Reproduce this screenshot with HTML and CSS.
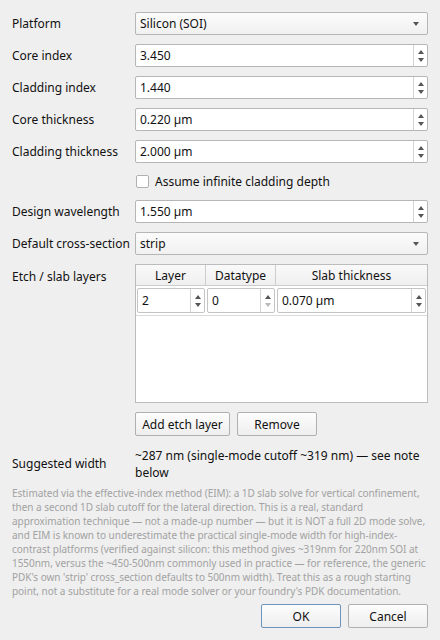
FILE: index.html
```html
<!DOCTYPE html>
<html lang="en">
<head>
  <meta charset="UTF-8">
  <title>Waveguide settings</title>
  <link rel="stylesheet" href="styles.css">
</head>
<body>
  <div class="dialog">
    <div class="form">
      <label>Platform</label>
      <div class="combo"><span>Silicon (SOI)</span><i class="tri-down"></i></div>

      <label>Core index</label>
      <div class="spin"><span>3.450</span><div class="arrows"><i class="tri-up"></i><i class="tri-down"></i></div></div>

      <label>Cladding index</label>
      <div class="spin"><span>1.440</span><div class="arrows"><i class="tri-up"></i><i class="tri-down"></i></div></div>

      <label>Core thickness</label>
      <div class="spin"><span>0.220 µm</span><div class="arrows"><i class="tri-up"></i><i class="tri-down"></i></div></div>

      <label>Cladding thickness</label>
      <div class="spin"><span>2.000 µm</span><div class="arrows"><i class="tri-up"></i><i class="tri-down"></i></div></div>

      <div></div>
      <div class="check"><span class="box"></span>Assume infinite cladding depth</div>

      <label>Design wavelength</label>
      <div class="spin"><span>1.550 µm</span><div class="arrows"><i class="tri-up"></i><i class="tri-down"></i></div></div>

      <label>Default cross-section</label>
      <div class="combo"><span>strip</span><i class="tri-down"></i></div>

      <label class="top">Etch / slab layers</label>
      <div>
        <div class="table">
          <div class="th">Layer</div>
          <div class="th">Datatype</div>
          <div class="th last">Slab thickness</div>
          <div class="td"><div class="spin cell"><span>2</span><div class="arrows"><i class="tri-up"></i><i class="tri-down"></i></div></div></div>
          <div class="td"><div class="spin cell"><span>0</span><div class="arrows"><i class="tri-up"></i><i class="tri-down off"></i></div></div></div>
          <div class="td"><div class="spin cell"><span>0.070 µm</span><div class="arrows"><i class="tri-up"></i><i class="tri-down"></i></div></div></div>
        </div>
        <div class="btn-row">
          <button class="btn wide">Add etch layer</button>
          <button class="btn">Remove</button>
        </div>
      </div>

      <label>Suggested width</label>
      <div class="result">~287 nm (single-mode cutoff ~319 nm) — see note below</div>
    </div>

    <p class="note">Estimated via the effective-index method (EIM): a 1D slab solve for vertical confinement,<br>
      then a second 1D slab cutoff for the lateral direction. This is a real, standard<br>
      approximation technique — not a made-up number — but it is NOT a full 2D mode solve,<br>
      and EIM is known to underestimate the practical single-mode width for high-index-<br>
      contrast platforms (verified against silicon: this method gives ~319nm for 220nm SOI at<br>
      1550nm, versus the ~450-500nm commonly used in practice — for reference, the generic<br>
      PDK's own 'strip' cross_section defaults to 500nm width). Treat this as a rough starting<br>
      point, not a substitute for a real mode solver or your foundry's PDK documentation.</p>

    <div class="footer">
      <button class="btn default">OK</button>
      <button class="btn">Cancel</button>
    </div>
  </div>
</body>
</html>
```

FILE: styles.css
```css
body {
  margin: 0;
  background: #efefef;
  font-family: "Noto Sans", "Open Sans", sans-serif;
  font-size: 12px;
  color: #111;
}
.dialog {
  padding: 12px 12px 0 12px;
}
.form {
  display: grid;
  grid-template-columns: 123px 293px;
  row-gap: 9px;
  align-items: center;
}
.form label.top {
  align-self: start;
  margin-top: 4px;
}
.spin, .combo {
  height: 23px;
  box-sizing: border-box;
  border: 1px solid #b6b6b6;
  border-radius: 2px;
  display: flex;
  align-items: center;
}
.spin {
  background: #fff;
}
.spin span, .combo span {
  flex: 1;
  padding-left: 4px;
}
.combo {
  background: linear-gradient(#fbfbfb, #f1f1f1);
  padding-right: 8px;
}
.arrows {
  width: 13px;
  height: 100%;
  border-left: 1px solid #d4d4d4;
  display: flex;
  flex-direction: column;
  align-items: center;
  justify-content: center;
  gap: 4px;
}
.tri-up, .tri-down {
  width: 0;
  height: 0;
  border-left: 3.5px solid transparent;
  border-right: 3.5px solid transparent;
}
.tri-up { border-bottom: 4px solid #555; }
.tri-down { border-top: 4px solid #555; }
.tri-down.off { border-top-color: #b8b8b8; }
.check {
  display: flex;
  align-items: center;
  height: 19px;
}
.box {
  width: 11px;
  height: 11px;
  border: 1px solid #b0b0b0;
  border-radius: 2px;
  background: #fff;
  margin: 0 6px 0 1px;
}
.table {
  height: 139px;
  box-sizing: border-box;
  border: 1px solid #bcbcbc;
  background: #fff;
  display: grid;
  grid-template-columns: 70px 70px 1fr;
  grid-template-rows: 21px 30px;
  align-content: start;
}
.th {
  background: linear-gradient(#f9f9f9, #efefef);
  border-right: 1px solid #cdcdcd;
  border-bottom: 1px solid #cdcdcd;
  display: flex;
  align-items: center;
  justify-content: center;
}
.th.last { border-right: none; }
.td {
  border-bottom: 1px solid #dadada;
  padding: 2px 1px 2px 1px;
}
.spin.cell {
  height: 25px;
  border-color: #c4c4c4;
}
.btn-row {
  display: flex;
  gap: 7px;
  margin-top: 9px;
}
.btn {
  font: inherit;
  color: inherit;
  box-sizing: border-box;
  white-space: nowrap;
  height: 24px;
  min-width: 80px;
  padding: 0 6px;
  border: 1px solid #b0b0b0;
  border-radius: 2px;
  background: linear-gradient(#fdfdfd, #eeeeee);
}
.btn.wide { width: 95px; }
.btn.default { border-color: #6b93bb; }
.result {
  line-height: 17px;
  margin-top: 2px;
}
.note {
  margin: 5px 0 0 0;
  font-size: 10px;
  line-height: 14px;
  letter-spacing: -0.04px;
  white-space: nowrap;
  color: #a2a2a2;
}
.footer {
  display: flex;
  justify-content: flex-end;
  gap: 7px;
  margin-top: 6px;
}
```
